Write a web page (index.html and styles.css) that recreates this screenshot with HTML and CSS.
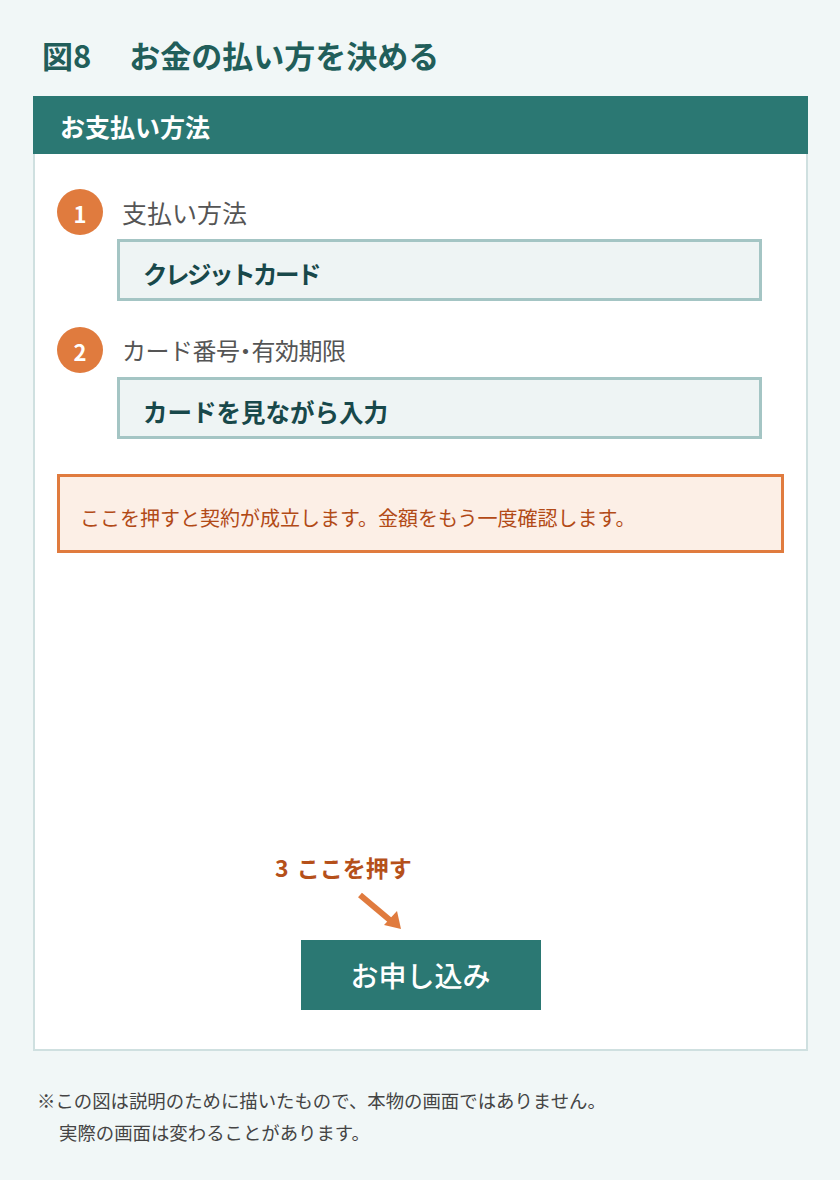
FILE: index.html
```
<!DOCTYPE html>
<html lang="ja">
<head>
<meta charset="utf-8">
<link rel="stylesheet" href="styles.css">
</head>
<body>
<div class="page">
  <h1 class="title"><span class="fig">図8</span>お金の払い方を決める</h1>
  <div class="card">
    <div class="card-header">お支払い方法</div>
    <div class="card-body">
      <div class="step">
        <div class="step-head">
          <span class="badge">1</span>
          <span class="label">支払い方法</span>
        </div>
        <div class="field field-tight">クレジットカード</div>
      </div>
      <div class="step">
        <div class="step-head">
          <span class="badge">2</span>
          <span class="label label-tight">カード番号<span class="dot">・</span>有効期限</span>
        </div>
        <div class="field">カードを見ながら入力</div>
      </div>
      <div class="notice">ここを押すと契約が成立します。金額をもう一度確認します。</div>
      <div class="action">
        <div class="hint">3 ここを押す</div>
        <svg class="arrow" width="50" height="42" viewBox="0 0 50 42">
          <line x1="5" y1="5" x2="36" y2="31" stroke="#e07b3e" stroke-width="6"/>
          <polygon points="29,35 42,21 46,39" fill="#e07b3e"/>
        </svg>
        <button class="submit">お申し込み</button>
      </div>
    </div>
  </div>
  <div class="footnote">
    <p>※この図は説明のために描いたもので、本物の画面ではありません。</p>
    <p class="indent">実際の画面は変わることがあります。</p>
  </div>
</div>
</body>
</html>
```
FILE: styles.css
```
* { box-sizing: border-box; }
html, body { margin: 0; padding: 0; }
body {
  background: #f1f7f7;
  font-family: "Noto Sans CJK JP", "Noto Sans", sans-serif;
  width: 840px;
  height: 1180px;
  overflow: hidden;
}
.page {
  padding: 35px 32px 0 33px;
}
.title {
  margin: 0 0 21px 9px;
  font-size: 31px;
  line-height: 40px;
  font-weight: 700;
  color: #215e5a;
}
.title .fig {
  margin-right: 38px;
}
.card {
  width: 775px;
  background: #ffffff;
  border: 2px solid #cfe0e0;
  border-top: none;
}
.card-header {
  height: 58px;
  margin: 0 -2px;
  background: #2b7873;
  color: #ffffff;
  font-size: 25px;
  font-weight: 700;
  display: flex;
  align-items: center;
  padding-left: 27px;
  padding-top: 2px;
}
.card-body {
  padding: 35px 22px 39px 22px;
  display: flex;
  flex-direction: column;
}
.step + .step { margin-top: 26px; }
.step-head {
  display: flex;
  align-items: center;
  gap: 19px;
  height: 46px;
}
.badge {
  width: 46px;
  height: 46px;
  border-radius: 50%;
  background: #e07b3e;
  color: #ffffff;
  font-size: 22px;
  font-weight: 700;
  display: flex;
  align-items: center;
  justify-content: center;
  padding-top: 2px;
}
.label {
  font-size: 25px;
  color: #555555;
  line-height: 1;
}
.label-tight {
  font-size: 24px;
  letter-spacing: -0.5px;
}
.label .dot {
  font-feature-settings: "halt";
  letter-spacing: 0;
}
.field {
  margin: 4px 22px 0 60px;
  height: 62px;
  border: 3px solid #a4c5c4;
  background: #eef4f4;
  display: flex;
  align-items: center;
  padding: 6px 0 0 23px;
  font-size: 24.5px;
  font-weight: 700;
  color: #18484a;
}
.field-tight {
  letter-spacing: -2.5px;
}
.notice {
  margin-top: 35px;
  height: 79px;
  border: 3px solid #e07b3e;
  background: #fcefe6;
  color: #b24a16;
  font-size: 20px;
  display: flex;
  align-items: center;
  padding: 8px 0 0 20px;
}
.action {
  margin-top: 299px;
  display: flex;
  flex-direction: column;
  align-items: center;
}
.hint {
  align-self: flex-start;
  margin-left: 218px;
  font-size: 23px;
  line-height: 30px;
  font-weight: 700;
  color: #b5501a;
  word-spacing: 3px;
}
.arrow {
  display: block;
  align-self: flex-start;
  margin: 8px 0 0 298px;
}
.submit {
  margin-top: 8px;
  width: 240px;
  height: 70px;
  border: none;
  background: #2b7873;
  color: #ffffff;
  font-family: inherit;
  font-size: 28px;
  font-weight: 500;
  padding: 0;
}
.footnote {
  margin-top: 33px;
  padding-left: 4px;
  color: #444444;
  font-size: 18.4px;
  line-height: 32px;
}
.footnote p { margin: 0; }
.footnote .indent { padding-left: 22px; }
```
